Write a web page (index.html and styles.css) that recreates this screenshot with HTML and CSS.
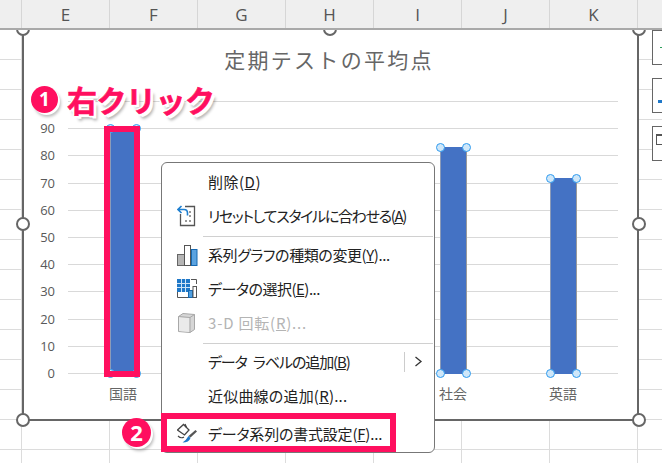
FILE: index.html

```html
<!DOCTYPE html>
<html lang="ja">
<head>
  <meta charset="UTF-8">
  <meta name="viewport" content="width=device-width, initial-scale=1.0">
  <title>定期テストの平均点</title>
  <link rel="stylesheet" href="styles.css">
</head>
<body>
  <div class="sheet">
    <div class="col-head">
      <div class="corner"></div>
      <div class="col">E</div>
      <div class="col">F</div>
      <div class="col">G</div>
      <div class="col">H</div>
      <div class="col">I</div>
      <div class="col">J</div>
      <div class="col">K</div>
      <div class="col"></div>
    </div>

    <div class="chart">
      <h1 class="chart-title">定期テストの平均点</h1>
      <div class="plot">
        <div class="axis">
          <span></span><span>90</span><span>80</span><span>70</span><span>60</span><span>50</span>
          <span>40</span><span>30</span><span>20</span><span>10</span><span>0</span>
        </div>
        <div class="area">
          <div class="lines">
            <i></i><i></i><i></i><i></i><i></i><i></i><i></i><i></i><i></i><i></i><i></i>
          </div>
          <div class="bars">
            <div class="slot"><div class="bar" style="height: 246px"><b class="tl"></b><b class="tr"></b><b class="bl"></b><b class="br"></b></div></div>
            <div class="slot"></div>
            <div class="slot"></div>
            <div class="slot"><div class="bar" style="height: 227px"><b class="tl"></b><b class="tr"></b><b class="bl"></b><b class="br"></b></div></div>
            <div class="slot"><div class="bar" style="height: 196px"><b class="tl"></b><b class="tr"></b><b class="bl"></b><b class="br"></b></div></div>
          </div>
        </div>
      </div>
      <div class="cats">
        <span>国語</span><span></span><span></span><span>社会</span><span>英語</span>
      </div>
      <b class="grip g1"></b><b class="grip g2"></b><b class="grip g3"></b>
      <b class="grip g4"></b><b class="grip g5"></b>
      <b class="grip g6"></b><b class="grip g7"></b><b class="grip g8"></b>
    </div>

    <div class="side">
      <div class="side-btn"><span class="plus"></span></div>
      <div class="side-btn"><span class="brush"></span></div>
      <div class="side-btn"><span class="funnel"></span></div>
    </div>

    <div class="menu">
      <div class="item"><span class="ico"></span><span class="fit-del">削除(<u>D</u>)</span></div>
      <div class="item">
        <span class="ico">
          <svg width="22" height="22" viewBox="0 0 22 22">
            <path d="M3.500 9V20.500H17.500V1.500H8" fill="#fff" stroke="#555" stroke-width="1.300"/>
            <path d="M12 7h2M12 11h2M8 16h2M12 16h2" stroke="#777" stroke-width="1.500"/>
            <path d="M4.500 1 1 4.500 4.500 8M1.500 4.500H7Q10.500 4.500 10.500 8V10.500" fill="none" stroke="#1e7fd0" stroke-width="1.600"/>
          </svg>
        </span>
        <span class="fit-reset">リセットしてスタイルに合わせる(<u>A</u>)</span>
      </div>
      <div class="sep"></div>
      <div class="item">
        <span class="ico">
          <svg width="22" height="22" viewBox="0 0 22 22">
            <rect x="0.500" y="10.500" width="7" height="11" fill="#b5b5b5" stroke="#666"/>
            <rect x="7.500" y="1.500" width="6" height="20" fill="#fff" stroke="#555"/>
            <rect x="14.500" y="5.500" width="5.500" height="16" fill="#5ba3e0" stroke="#1668b0"/>
          </svg>
        </span>
        <span class="fit-type">系列グラフの種類の変更(<u>Y</u>)...</span>
      </div>
      <div class="item">
        <span class="ico">
          <svg width="22" height="22" viewBox="0 0 22 22">
            <path d="M14 1.500H19.500V6M0.500 14V19.500H11" fill="none" stroke="#555"/>
            <rect x="0" y="1" width="13" height="13" fill="#1f78c8"/>
            <path d="M4.500 1V14M8.500 1V14M0 5.500H13M0 9.500H13" stroke="#cfe4f6"/>
            <rect x="11.500" y="12.500" width="4" height="7" fill="#4f9fe0" stroke="#1668b0"/>
            <rect x="16" y="8.500" width="3.500" height="11" fill="#fff" stroke="#555"/>
          </svg>
        </span>
        <span class="fit-data">データの選択(<u>E</u>)...</span>
      </div>
      <div class="item off">
        <span class="ico">
          <svg width="22" height="22" viewBox="0 0 22 22">
            <path d="M1.500 4.500 6 1.500 17.500 2.500V17.500L13 20.500 1.500 19.500z" fill="#d6d6d6" stroke="#a8a8a8"/>
            <path d="M2 5 12.500 6V20L2 19z" fill="#eaeaea"/>
            <path d="M1.500 4.500 13 5.500V20.500M13 5.500 17.500 2.500" fill="none" stroke="#a8a8a8"/>
          </svg>
        </span>
        <span class="fit-3d">3-D 回転(<u>R</u>)...</span>
      </div>
      <div class="sep"></div>
      <div class="item">
        <span class="ico"></span><span class="fit-label">データ ラベルの追加(<u>B</u>)</span>
        <span class="more"><svg width="9" height="11" viewBox="0 0 9 11"><path d="M1.500 1 7 5.500 1.500 10" fill="none" stroke="#333" stroke-width="1.300"/></svg></span>
      </div>
      <div class="item"><span class="ico"></span><span class="fit-trend">近似曲線の追加(<u>R</u>)...</span></div>
      <div class="item last">
        <span class="ico">
          <svg width="22" height="22" viewBox="0 0 22 22">
            <path d="M0.500 7 6.500 1.500 12 7 7.500 12z" fill="#fff" stroke="#444" stroke-width="1.300"/>
            <path d="M8 1 9.500 4.500" stroke="#444" stroke-width="1.300"/>
            <path d="M1 13Q4 16 7 14" fill="none" stroke="#444" stroke-width="1.100"/>
            <path d="M18.500 7 20 8.500 13.500 14.500 11.500 13z" fill="#555"/>
            <path d="M11.500 13 13.500 15Q12 19.500 5.500 19.500 9 17.500 11.500 13z" fill="#1f78c8"/>
          </svg>
        </span>
        <span class="fit-format">データ系列の書式設定(<u>F</u>)...</span>
      </div>
    </div>

    <div class="mark mark-bar"></div>
    <div class="mark mark-item"></div>
    <div class="step step-1">1</div>
    <div class="callout">右クリック</div>
    <div class="step step-2">2</div>
  </div>
</body>
</html>
```

FILE: styles.css

```css
body {
  margin: 0;
  overflow: hidden;
  background: #fff;
  font-family: "Noto Sans CJK JP", "Noto Sans", sans-serif;
}
.sheet {
  position: relative;
  width: 662px;
  height: 463px;
  overflow: hidden;
  background-color: #fff;
  background-image:
    linear-gradient(to right, transparent 21px, #dcdcdc 21px, #dcdcdc 22px, transparent 22px),
    linear-gradient(to bottom, transparent 29px, #dcdcdc 29px);
  background-size: 88px 100%, 100% 30px;
}

/* column letters */
.col-head {
  position: relative;
  z-index: 2;
  display: flex;
  height: 28px;
  background: #efefef;
  border-bottom: 2px solid #a9a9a9;
}
.corner {
  width: 21px;
  flex: none;
  border-right: 1px solid #d6d6d6;
}
.col {
  width: 87px;
  flex: none;
  border-right: 1px solid #d6d6d6;
  text-align: center;
  font-family: "Open Sans", sans-serif;
  font-size: 17px;
  line-height: 29px;
  color: #555;
}

/* chart */
.chart {
  position: absolute;
  left: 22px;
  top: 29px;
  width: 613px;
  height: 390px;
  background: #fff;
  border: solid #666;
  border-width: 0 2px 2px;
}
.chart-title {
  margin: 0;
  padding: 16px 3px 0 0;
  height: 29px;
  font-size: 21px;
  font-weight: 400;
  line-height: 29px;
  letter-spacing: 2.300px;
  text-align: center;
  color: #666;
}
.plot {
  display: flex;
  margin-top: 27px;
}
.axis {
  width: 31px;
  height: 273px;
  flex: none;
  display: flex;
  flex-direction: column;
  justify-content: space-between;
  align-items: flex-end;
  font-family: "Open Sans", sans-serif;
  font-size: 13px;
  color: #595959;
}
.axis span {
  height: 1px;
  line-height: 1px;
}
.area {
  position: relative;
  width: 550px;
  height: 273px;
  margin-left: 13px;
}
.lines {
  height: 100%;
  display: flex;
  flex-direction: column;
  justify-content: space-between;
}
.lines i {
  display: block;
  height: 1px;
  background: #d9d9d9;
}
.bars {
  position: absolute;
  inset: 0;
  display: flex;
}
.slot {
  flex: 1;
  display: flex;
  justify-content: center;
  align-items: flex-end;
}
.bar {
  position: relative;
  width: 27px;
  background: #4472c4;
  box-shadow: inset -1px 0 0 #9a9a9a, inset 1px 0 0 #8c9bb8;
}
.bar b {
  position: absolute;
  box-sizing: border-box;
  width: 9px;
  height: 9px;
  border: 1.500px solid #2f9bef;
  border-radius: 50%;
  background: #cfe7f9;
}
.tl { left: -4px; top: -4px; }
.tr { right: -4px; top: -4px; }
.bl { left: -4px; bottom: -4px; }
.br { right: -4px; bottom: -4px; }
.cats {
  display: flex;
  margin: 10px 0 0 44px;
  width: 550px;
}
.cats span {
  flex: 1;
  text-align: center;
  font-size: 14px;
  line-height: 19px;
  color: #666;
}
.grip {
  position: absolute;
  width: 10px;
  height: 10px;
  border: 2px solid #666;
  border-radius: 50%;
  background: #fff;
}
.g1 { left: -8px; top: -7px; }
.g2 { left: 299px; top: -7px; }
.g3 { right: -9px; top: -7px; }
.g4 { left: -8px; top: 188px; }
.g5 { right: -9px; top: 188px; }
.g6 { left: -8px; bottom: -8px; }
.g7 { left: 299px; bottom: -8px; }
.g8 { right: -9px; bottom: -8px; }

/* buttons beside the chart */
.side {
  position: absolute;
  left: 652px;
  top: 30px;
  display: flex;
  flex-direction: column;
  gap: 13px;
}
.side-btn {
  position: relative;
  width: 40px;
  height: 33px;
  border: 1px solid #666;
  background: #fff;
}
.plus {
  position: absolute;
  left: 7px;
  top: 16px;
  width: 12px;
  height: 1px;
  background: #2e9e5b;
}
.brush {
  position: absolute;
  left: 5px;
  top: 21px;
  width: 12px;
  height: 3px;
  background: #1f78c8;
}
.funnel {
  position: absolute;
  left: 3px;
  top: 7px;
  width: 12px;
  height: 8px;
  border: 1px solid #555;
  border-top-width: 2px;
}

/* context menu */
.menu {
  position: absolute;
  left: 161px;
  top: 162px;
  width: 272px;
  height: 286px;
  padding-top: 3px;
  background: #fff;
  border: 1px solid #777;
  border-radius: 6px;
}
.item {
  display: flex;
  align-items: center;
  box-sizing: border-box;
  height: 34px;
  padding-bottom: 3px;
  font-size: 15px;
  font-feature-settings: "palt";
  color: #222;
  white-space: nowrap;
}
.item.off {
  color: #b4b4b4;
}
.item.last {
  margin-top: 4px;
}
.ico {
  width: 22px;
  height: 22px;
  margin: 0 9px 0 15px;
  flex: none;
}
.ico svg {
  display: block;
}
.fit-del { letter-spacing: 0.5px; }
.fit-reset { letter-spacing: -1.300px; }
.fit-type { letter-spacing: -0.4px; }
.fit-data { letter-spacing: -0.5px; }
.fit-3d { letter-spacing: 0.8px; }
.fit-label { letter-spacing: -1.100px; word-spacing: 4px; }
.fit-trend { letter-spacing: 0.2px; }
.fit-format { letter-spacing: -0.2px; }
.more {
  margin-left: auto;
  margin-right: 11px;
  padding-left: 9px;
  height: 20px;
  display: flex;
  align-items: center;
  border-left: 1px solid #ccc;
}
.sep {
  height: 1px;
  margin: 2px 1px 2px 41px;
  background: #d0d0d0;
}

/* annotations */
.mark {
  position: absolute;
  box-sizing: border-box;
  border: 6px solid #ff0f5f;
}
.mark-bar {
  left: 104px;
  top: 126px;
  width: 36px;
  height: 251px;
}
.mark-item {
  left: 161px;
  top: 413px;
  width: 235px;
  height: 39px;
}
.step {
  position: absolute;
  border-radius: 50%;
  background: #ff0f5f;
  color: #fff;
  font-family: "Open Sans", sans-serif;
  font-weight: 700;
  text-align: center;
  box-shadow: 2px 2px 0 #fff, 3px 4px 3px rgba(0, 0, 0, 0.25);
}
.step-1 {
  left: 31px;
  top: 86px;
  width: 27px;
  height: 27px;
  font-size: 19px;
  line-height: 27px;
}
.step-2 {
  left: 122px;
  top: 418px;
  width: 29px;
  height: 29px;
  font-size: 22px;
  line-height: 29px;
}
.callout {
  position: absolute;
  left: 67px;
  top: 78px;
  font-size: 30px;
  font-weight: 700;
  line-height: 43px;
  letter-spacing: -0.5px;
  color: #ff0f5f;
  -webkit-text-stroke: 0.6px #ff0f5f;
  text-shadow:
    2px 0 0 #fff, -2px 0 0 #fff, 0 2px 0 #fff, 0 -2px 0 #fff,
    3px 3px 0 #fff, 4px 5px 3px rgba(0, 0, 0, 0.3);
}
```
